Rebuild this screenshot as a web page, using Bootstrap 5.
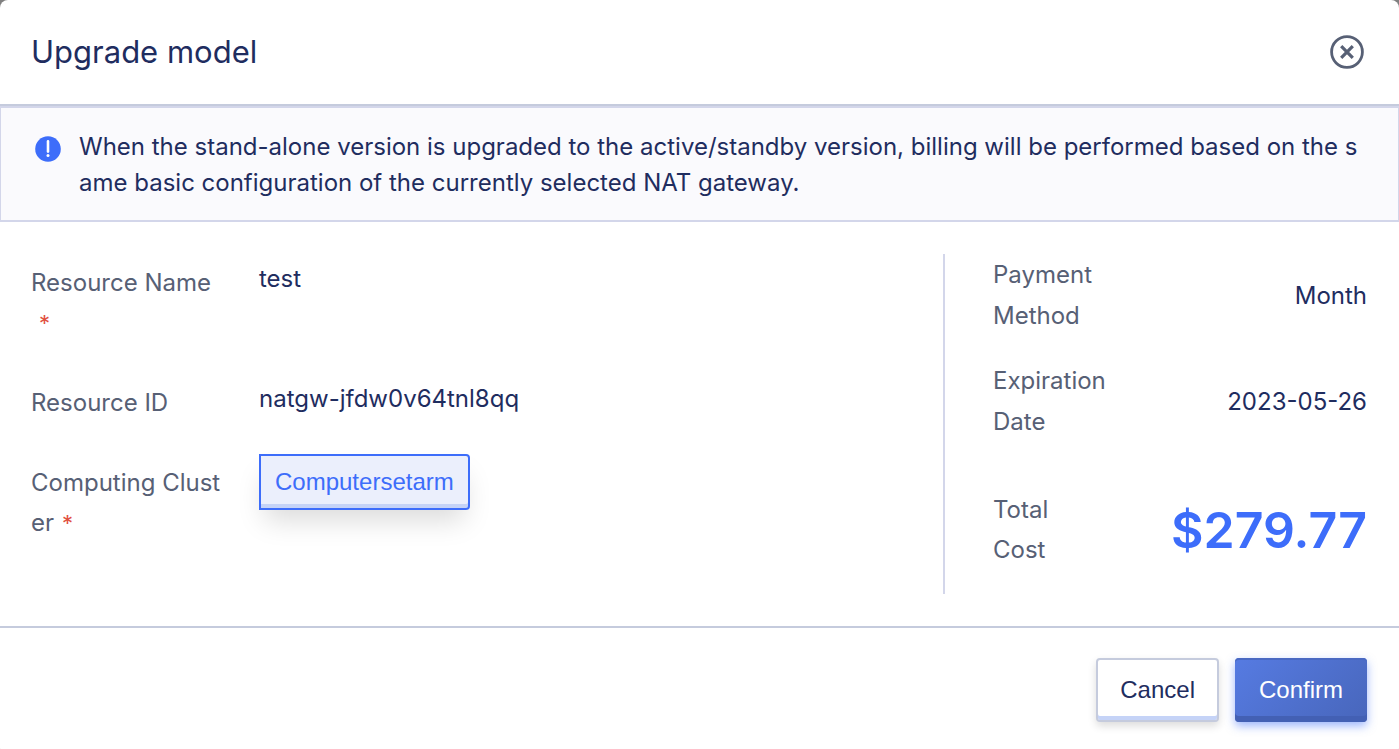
<!DOCTYPE html>
<html lang="en">
<head>
<meta charset="utf-8">
<meta name="viewport" content="width=device-width, initial-scale=1">
<title>Upgrade model</title>
<link href="https://cdn.jsdelivr.net/npm/bootstrap@5.3.0/dist/css/bootstrap.min.css" rel="stylesheet">
<style>
  body { background: #808080; color: #1f2d5f; font-family: Inter, "Noto Sans", sans-serif; font-size: 24px; }
  .dialog { min-height: 100vh; border-radius: 8px 8px 4px 4px; }
  .dialog-head { padding: 24px 32px 24px 31px; border-bottom: 2px solid #c5cbdd; }
  .dialog-head h1 { font-size: 31px; line-height: 56px; font-weight: 400; }
  .close-btn { width: 40px; height: 40px; color: #576075; }
  .notice { padding: 21px 32px 19px 34px; gap: 18px; background: #fafafd; border: 2px solid #d3d6ea; border-width: 2px 1px; line-height: 36px; word-break: break-all; }
  .notice svg { margin-top: 7px; }
  .dialog-main { padding: 32px 32px 32px 31px; }
  .fields { margin: 0; }
  .field-row { margin-bottom: 31px; }
  .field-label { width: 228px; padding: 9px 36px 0 0; line-height: 40px; color: #576075; word-break: break-all; font-weight: 400; }
  .field-value { margin: 0; line-height: 49px; }
  .req { display: inline-block; margin-left: 8px; color: #e1503f; font-size: 22px; line-height: 24px; }
  .summary { flex: 0 1 424px; padding-left: 48px; border-left: 2px solid #d3d6ea; line-height: 41px; gap: 24px; padding-bottom: 24px; }
  .summary dt { width: 120px; font-weight: 400; color: #576075; }
  .total-row { margin-top: 24px; line-height: 40px; }
  .price { font-size: 50px; font-weight: 600; color: #3d6dfa; }
  .btn { font-family: "Liberation Sans", Arial, sans-serif; font-size: 24px; line-height: 36px; border-width: 2px; border-radius: 4px; }
  .btn-choice, .btn-choice:hover { height: 56px; padding: 8px 14px; color: #3d6dfa; background: #ebeffc; border-color: #3d6dfa; border-radius: 0 4px 4px 0; box-shadow: inset 0 -4px #c5d3f7, 0 16px 28px -6px rgba(0,0,0,.15); }
  .dialog-foot { padding: 30px 32px; gap: 16px; border-top: 2px solid #c5cbdd; }
  .dialog-foot .btn { height: 64px; padding: 12px 22px; }
  .btn-cancel, .btn-cancel:hover { color: #1f2d5f; background: #fff; border-color: #c5cbdd; box-shadow: inset 0 -4px #c5d3f7, 0 4px 8px rgba(0,0,0,.14); }
  .dialog-foot .btn-ok { border: 0; padding: 14px 24px; color: #fff; background: linear-gradient(135deg, #567be2, #4866bb); box-shadow: inset 0 -6px #4360b4, inset 0 2px #4a69c2, 0 4px 10px rgba(61,109,250,.5); }
</style>
</head>
<body>
<main class="dialog bg-white d-flex flex-column" role="dialog" aria-labelledby="dlg-title">
  <header class="dialog-head d-flex justify-content-between align-items-center">
    <h1 id="dlg-title" class="m-0">Upgrade model</h1>
    <button type="button" class="close-btn bg-transparent border-0 p-0 d-flex" aria-label="Close">
      <svg width="40" height="40" viewBox="0 0 40 40" fill="none" stroke="currentColor"><circle cx="20" cy="20" r="15.4" stroke-width="2.8"/><path d="M14.2 14.2l11.6 11.6M25.8 14.2L14.2 25.8" stroke-width="3.2"/></svg>
    </button>
  </header>
  <div class="notice d-flex align-items-start" role="note">
    <svg class="flex-shrink-0" width="26" height="26" viewBox="0 0 26 26" aria-hidden="true"><circle cx="13" cy="13" r="12.8" fill="#3d6dfa"/><path d="M13 5.4v10.2" stroke="#fff" stroke-width="2.6" stroke-linecap="round"/><circle cx="13" cy="19.4" r="1.5" fill="#fff"/></svg>
    <div>When the stand-alone version is upgraded to the active/standby version, billing will be performed based on the same basic configuration of the currently selected NAT gateway.</div>
  </div>
  <section class="dialog-main d-flex flex-wrap flex-grow-1 justify-content-between">
    <dl class="fields">
      <div class="field-row d-flex">
        <dt class="field-label">Resource Name <span class="req">*</span></dt>
        <dd class="field-value">test</dd>
      </div>
      <div class="field-row d-flex">
        <dt class="field-label">Resource ID</dt>
        <dd class="field-value">natgw-jfdw0v64tnl8qq</dd>
      </div>
      <div class="d-flex">
        <dt class="field-label">Computing Cluster<span class="req">*</span></dt>
        <dd class="field-value"><button type="button" class="btn btn-choice d-block" aria-pressed="true">Computersetarm</button></dd>
      </div>
    </dl>
    <dl class="summary d-flex flex-column m-0">
      <div class="d-flex justify-content-between align-items-center"><dt>Payment Method</dt><dd class="m-0">Month</dd></div>
      <div class="d-flex justify-content-between align-items-center"><dt>Expiration Date</dt><dd class="m-0">2023-05-26</dd></div>
      <div class="total-row d-flex justify-content-between align-items-center"><dt>Total<br>Cost</dt><dd class="price m-0">$279.77</dd></div>
    </dl>
  </section>
  <footer class="dialog-foot d-flex justify-content-end">
    <button type="button" class="btn btn-cancel">Cancel</button>
    <button type="button" class="btn btn-ok">Confirm</button>
  </footer>
</main>
<script src="https://cdn.jsdelivr.net/npm/bootstrap@5.3.0/dist/js/bootstrap.bundle.min.js"></script>
</body>
</html>
